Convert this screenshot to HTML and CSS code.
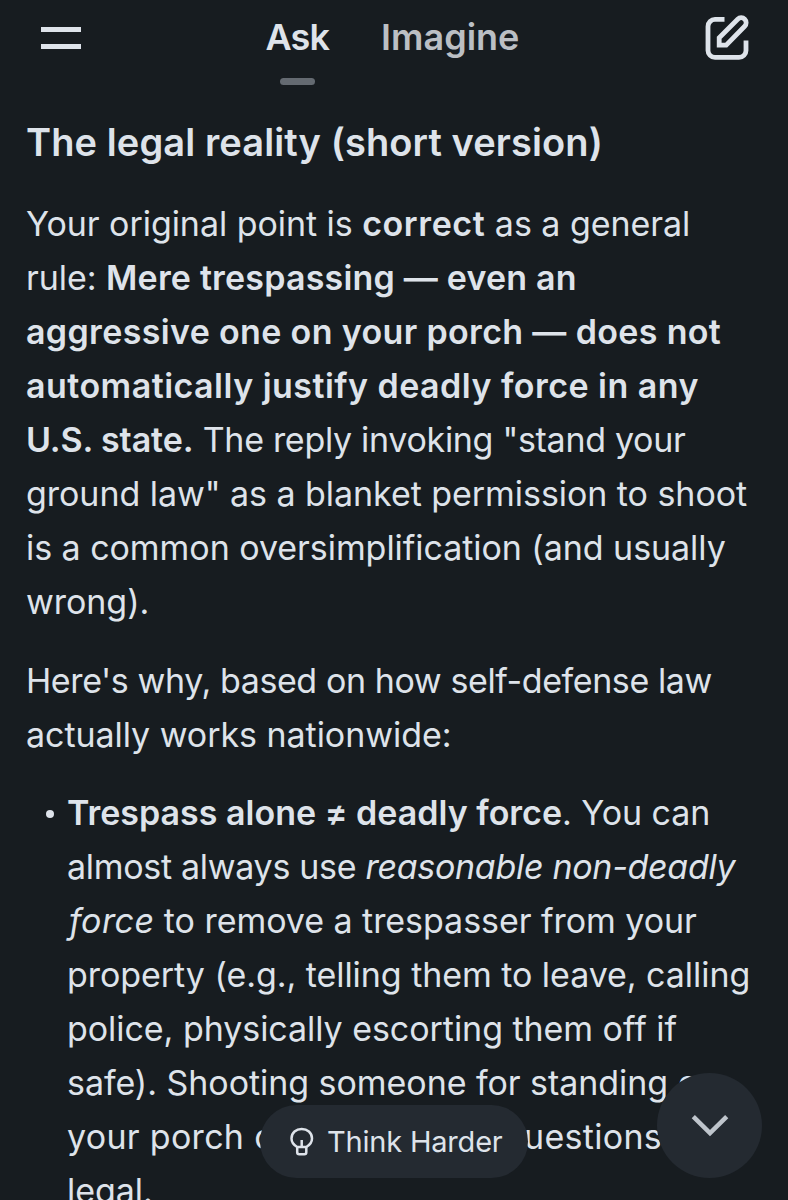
FILE: index.html
```html
<!DOCTYPE html>
<html lang="en">
  <head>
    <meta charset="utf-8" />
    <title>Ask</title>
    <link rel="stylesheet" href="styles.css">
  </head>

  <body>
    <header class="topbar">
      <button type="button" class="menu" aria-label="Menu"></button>
      <nav class="tabs">
        <a class="tab active">Ask</a>
        <a class="tab imagine">Imagine</a>
      </nav>
      <button type="button" class="compose" aria-label="New chat">
        <svg width="46" height="46" viewBox="0 0 46 46" fill="none" stroke="currentColor" stroke-width="4.8">
          <path d="M20.5 4.4H11a7 7 0 0 0-7 7v24a7 7 0 0 0 7 7h24a7 7 0 0 0 7-7V25.5" />
          <path d="M15.2 30.2v-7.5L33.7 4.2a4.9 4.9 0 0 1 7 7L22.2 30.2z" />
        </svg>
      </button>
    </header>

    <main class="answer">
      <h3>The legal reality (short version)</h3>

      <p>
        Your original point is <strong class="correct">correct</strong> as a general<br>
        rule: <strong class="mere">Mere trespassing — even an</strong><br>
        <strong>aggressive one on your porch — does not</strong><br>
        <strong class="auto">automatically justify deadly force in any</strong><br>
        <span class="tight"><strong class="state">U.S. state.</strong> The reply invoking "stand your</span><br>
        ground law" as a blanket permission to shoot<br>
        is a common oversimplification (and usually<br>
        wrong).
      </p>

      <p>
        <span class="tighter">Here's why, based on how self-defense law</span><br>
        actually works nationwide:
      </p>

      <ul>
        <li>
          <strong class="lead">Trespass alone ≠ deadly force</strong>. You can<br>
          <span class="tight">almost always use <em>reasonable non-deadly</em></span><br>
          <em class="force">force</em> to remove a trespasser from your<br>
          property (e.g., telling them to leave, calling<br>
          police, physically escorting them off if<br>
          safe). Shooting someone for standing on<br>
          <span class="loose">your porch or even asking questions</span> <span class="tail">isn't,</span><br>
          legal.
        </li>
      </ul>
    </main>

    <button type="button" class="think">
      <svg width="24" height="30" viewBox="0 0 24 30" fill="none" stroke="currentColor" stroke-width="2.5">
        <path d="M7.2 20C4.2 18.3 1.5 15.5 1.5 11.5 1.5 5.5 6.200 2 11.700 2S22 5.500 22 11.500c0 4-2.700 6.800-5.700 8.500z" />
        <path d="M7.200 20v5.300a2 2 0 0 0 2 2h5.100a2 2 0 0 0 2-2V20M11.700 13v7" />
      </svg>
      Think Harder
    </button>

    <button type="button" class="scroll-down" aria-label="Scroll to bottom">
      <svg width="38" height="24" viewBox="0 0 38 24" fill="none" stroke="currentColor" stroke-width="4.5">
        <path d="M2.300 2.600 19 19.200 35.700 2.600" />
      </svg>
    </button>
  </body>
</html>
```
FILE: styles.css
```css
body {
  margin: 0;
  height: 1200px;
  overflow: hidden;
  position: relative;
  background-color: #171c20;
  color: #dee3ea;
  font-family: Inter, "Liberation Sans", sans-serif;
}

button {
  padding: 0;
  border: none;
  background: none;
  color: inherit;
  font-family: inherit;
  cursor: pointer;
}

/* Top bar */
.topbar {
  display: flex;
  align-items: flex-start;
  justify-content: space-between;
  height: 115px;
  padding: 0 38px 0 41px;
  box-sizing: border-box;
}

.menu {
  width: 40px;
  height: 22px;
  margin-top: 27px;
  box-sizing: border-box;
  border-top: 5px solid #dee3ea;
  border-bottom: 5px solid #dee3ea;
}

.tabs {
  display: flex;
  gap: 52px;
  margin-top: 10px;
  font-size: 36px;
  font-weight: 600;
  line-height: 54px;
}

.tab {
  display: flex;
  flex-direction: column;
  align-items: center;
}

.active {
  letter-spacing: -0.9px;
}

.active::after {
  content: "";
  width: 35px;
  height: 7px;
  margin-top: 14px;
  border-radius: 4px;
  background-color: #646a71;
}

.imagine {
  color: #bbbfc4;
}

.compose {
  margin-top: 15px;
  height: 46px;
}

.compose svg {
  display: block;
}

/* Answer text */
.answer {
  padding: 0 0 0 26px;
  font-size: 34px;
  line-height: 54px;
  letter-spacing: -0.05px;
  white-space: nowrap;
}

h3 {
  margin: 0 0 28px;
  font-size: 38px;
  font-weight: 600;
  line-height: 54px;
  letter-spacing: 0.1px;
}

p {
  margin: 0 0 24.5px;
}

strong {
  font-weight: 600;
  letter-spacing: 0.35px;
}

.correct {
  letter-spacing: 0.6px;
}

.mere {
  letter-spacing: 0.2px;
}

.auto {
  letter-spacing: 0.47px;
}

.state {
  letter-spacing: -0.1px;
}

.tight {
  letter-spacing: -0.3px;
}

.tighter {
  letter-spacing: -0.4px;
}

.loose {
  letter-spacing: 0.3px;
}

.tail {
  letter-spacing: 1.3px;
}

.lead {
  letter-spacing: 0;
}

.force {
  margin-left: 2px;
  letter-spacing: 0.4px;
}

ul {
  margin: 0;
  padding: 0 0 0 41px;
  list-style: none;
}

li::before {
  content: "";
  float: left;
  width: 8px;
  height: 8px;
  margin: 24px 0 0 -21px;
  border-radius: 50%;
  background-color: #dee3ea;
}

/* Floating buttons */
.think {
  position: absolute;
  left: 260px;
  top: 1105px;
  display: flex;
  align-items: center;
  gap: 13px;
  width: 268px;
  height: 73px;
  padding-left: 30px;
  border-radius: 37px;
  background-color: #242a31;
  font-size: 29px;
  letter-spacing: -0.2px;
  white-space: nowrap;
}

.scroll-down {
  position: absolute;
  left: 657px;
  top: 1073px;
  display: flex;
  align-items: center;
  justify-content: center;
  width: 105px;
  height: 105px;
  border-radius: 50%;
  background-color: #242a31;
  color: #bfc5cc;
}
```
